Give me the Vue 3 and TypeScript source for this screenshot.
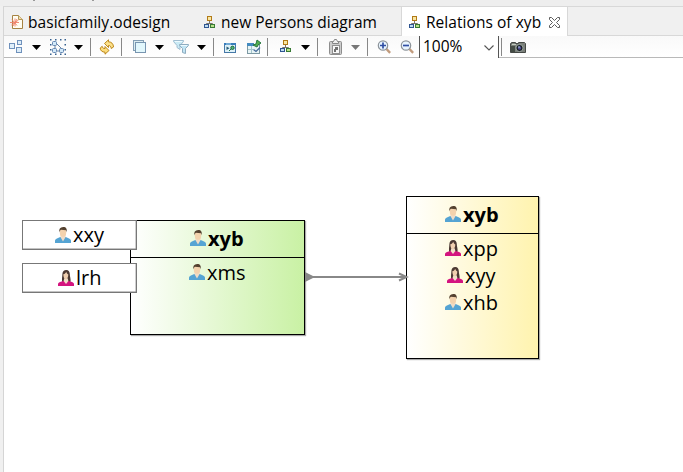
<script setup lang="ts">
type Kind = 'male' | 'female'
interface Member { name: string; kind: Kind; bold?: boolean; pos: string }
interface Tool { kind: 'icon' | 'arrow' | 'sep' | 'combo'; icon?: string; disabled?: boolean }

const icon = (name: string): Tool => ({ kind: 'icon', icon: name })
const arrow = (disabled = false): Tool => ({ kind: 'arrow', disabled })
const sep = (): Tool => ({ kind: 'sep' })

const tools: Tool[] = [
  icon('arrange'), arrow(), icon('select'), arrow(), sep(), icon('refresh'), sep(),
  icon('layers'), arrow(), icon('filter'), arrow(), sep(), icon('view'), icon('pinview'), sep(),
  icon('tree'), arrow(), sep(), icon('paste'), arrow(true), sep(),
  icon('zoomin'), icon('zoomout'), { kind: 'combo' }, sep(), icon('camera'),
]

const members: Member[] = [
  { name: 'xxy', kind: 'male', pos: 'm-xxy' },
  { name: 'lrh', kind: 'female', pos: 'm-lrh' },
  { name: 'xyb', kind: 'male', bold: true, pos: 'm-xyb1' },
  { name: 'xms', kind: 'male', pos: 'm-xms' },
  { name: 'xyb', kind: 'male', bold: true, pos: 'm-xyb2' },
  { name: 'xpp', kind: 'female', pos: 'm-xpp' },
  { name: 'xyy', kind: 'female', pos: 'm-xyy' },
  { name: 'xhb', kind: 'male', pos: 'm-xhb' },
]
</script>

<template>
  <div class="window">
    <svg class="defs" width="0" height="0">
      <defs>
        <symbol id="i-male" viewBox="0 0 16 16">
          <path d="M0 16v-2.5C.4 11.6 3 11 5.3 10h5.4c2.3 1 4.9 1.6 5.3 3.5V16z" fill="#55a4d3" />
          <path d="M5.4 10 8 14.4 10.6 10V7H5.4z" fill="#efdbc5" />
          <ellipse cx="8" cy="5.4" rx="3.2" ry="4.3" fill="#f3d2ad" />
          <path d="M4.4 5.3C3.8 2 5 .2 8.200.1c3.100 0 4.100 2 3.400 5.200L11 3.200 6 2.700l-.9.8z" fill="#54412f" />
        </symbol>
        <symbol id="i-female" viewBox="0 0 16 16">
          <path d="M4.600 12.200C3.500 11 4.200 7 4.400 4 4.600 1.200 6 0 8.200 0c2.600 0 3.500 1.800 3.600 4 .1 3 1.600 7 .3 8.400z" fill="#4c3933" />
          <path d="M0 16v-2.200C.5 12 3 11.800 5.500 11h5c2.500.8 5 1 5.500 2.800V16z" fill="#d4147f" />
          <path d="M5.600 11 8 14l2.400-3-.7-2.800H6.300z" fill="#f2dfc9" />
          <path d="M5.300 4.200c1.700-.1 2.500-1.300 3-2.400.3 1.400 1 2.300 2 2.800 0 2.700-1 4.700-2.400 4.700S5.300 7.300 5.300 4.200z" fill="#f0cfaf" />
        </symbol>
        <symbol id="i-tree" viewBox="0 0 16 16">
          <path d="M7.500 6v2.500M4.500 11V8.500h6V11" fill="none" stroke="#77736b" />
          <rect x="5.500" y="1.500" width="4" height="4" fill="#f9e6a2" stroke="#b17a17" />
          <rect x="2.500" y="9.500" width="4" height="3" fill="#bddcf0" stroke="#2f5591" />
          <rect x="8.500" y="9.500" width="4" height="3" fill="#b8e08a" stroke="#387b35" />
        </symbol>
        <symbol id="i-arrange" viewBox="0 0 16 16">
          <rect x="1.500" y="4.500" width="5" height="5" fill="#e0effa" stroke="#6f91bc" />
          <rect x="9.500" y="1.500" width="4" height="4" fill="#dcecf8" stroke="#6f91bc" />
          <rect x="8.500" y="8.500" width="5" height="5" fill="#dcecf8" stroke="#6f91bc" />
        </symbol>
        <symbol id="i-select" viewBox="0 0 16 16">
          <path d="M0 0h1.500v1.500H0zM5 0h1.500v1.500H5zM10 0h1.500v1.500H10zM14.500 0H16v1.500h-1.500zM0 5h1.500v1.500H0zM14.500 5H16v1.500h-1.500zM0 10h1.500v1.500H0zM14.500 10H16v1.500h-1.500zM0 14.500h1.500V16H0zM5 14.500h1.500V16H5zM10 14.500h1.500V16H10zM14.500 14.500H16V16h-1.500z" fill="#36618f" />
          <path d="m6 4 7 7M5 6v4M7 12h3" stroke="#6682a2" />
          <g fill="#d2e9f8" stroke="#6587b3"><rect x="2.500" y="2.500" width="4" height="4" rx="1" /><rect x="2.500" y="9.500" width="4" height="4" rx="1" /><rect x="9.500" y="9.500" width="4" height="4" rx="1" /></g>
        </symbol>
        <symbol id="i-refresh" viewBox="0 0 16 16">
          <path d="M5.500 4.500 9.500.800v2c2.800 0 5 2 5 5.200l-2.300 1.500C12 7.500 11.200 6.500 9.500 6.500v2z" fill="#fbe08a" stroke="#b57d0b" stroke-width=".9" />
          <path d="M10 11.500 6 15.200v-2c-2.800 0-4.800-1.700-4.800-4.200l2-1.700C3.500 9 4.300 9.500 6 9.500v-2z" fill="#fbdc7d" stroke="#b57d0b" stroke-width=".9" />
        </symbol>
        <symbol id="i-layers" viewBox="0 0 16 16">
          <rect x="1.500" y="1.500" width="10" height="10" fill="#dcecf0" stroke="#849fb5" />
          <rect x="3.500" y="3.500" width="10" height="10" fill="#e2f7fc" stroke="#7895b0" />
        </symbol>
        <symbol id="i-filter" viewBox="0 0 16 16">
          <path d="M.5 1.500h10v1l-3.500 4v4l-3-2v-2l-3.500-4z" fill="#c9eaf5" stroke="#a0bdd0" />
          <path d="M6.500 5.500h9v1l-3 3v5l-3-1v-4l-3-3z" fill="#c2e5f4" stroke="#8eacc0" />
          <path d="M2 2.500h7M8 6.500h6" stroke="#edfaff" />
        </symbol>
        <symbol id="i-view" viewBox="0 0 16 16">
          <rect x="2.500" y="4.500" width="11" height="9" fill="#def1f8" stroke="#4678a7" />
          <path d="M2 4h12v2H2z" fill="#397cba" /><path d="M4 5h5" stroke="#a8d5ef" />
          <path d="m4.500 7.500 3 1.800-3 1.800z" fill="#255b78" /><path d="m7 12 3-3" stroke="#1b7b46" />
          <circle cx="10.500" cy="8.800" r="1.700" fill="#54b573" stroke="#196740" />
        </symbol>
        <symbol id="i-pinview" viewBox="0 0 16 16">
          <rect x="1.500" y="5.500" width="12" height="9" fill="#e8f4f6" stroke="#7c99a3" />
          <path d="M1 4h7v3H1z" fill="#438bc0" /><path d="M5.500 7v7M2 10.500h5" stroke="#a4c6cc" />
          <path d="m7 6 3-1 1-4 4 3-3 2-1 2-2-1z" fill="#51ad4d" stroke="#287740" />
          <path d="m7.500 10.500 2.500 2 4-4" fill="none" stroke="#466c9c" stroke-width="1.300" />
        </symbol>
        <symbol id="i-paste" viewBox="0 0 16 16">
          <rect x="1.500" y="2.500" width="12" height="13" rx="1" fill="#ccc" stroke="#8d8d8d" />
          <path d="M4.500 4.500v-2h1l1-2h2l1 2h1v2z" fill="#eee" stroke="#858585" />
          <rect x="4.500" y="6.500" width="7" height="8" fill="#f8f8f8" stroke="#909090" />
          <path d="M7 8h3v3H8v2H6v-3h1z" fill="#707070" />
        </symbol>
        <symbol id="i-zoomin" viewBox="0 0 16 16">
          <path d="m9.500 10 3.600 3.800" stroke="#c19b7d" stroke-width="2.400" />
          <circle cx="6" cy="6.500" r="4.700" fill="#e9f5ff" stroke="#8c9399" stroke-width="1.200" />
          <path d="M3 6.500h6M6 3.500v6" stroke="#304fa3" stroke-width="1.700" />
        </symbol>
        <symbol id="i-zoomout" viewBox="0 0 16 16">
          <path d="m9.500 10 3.600 3.800" stroke="#c19b7d" stroke-width="2.400" />
          <circle cx="6" cy="6.500" r="4.700" fill="#e9f5ff" stroke="#8c9399" stroke-width="1.200" />
          <path d="M3 6.500h6" stroke="#304fa3" stroke-width="1.700" />
        </symbol>
        <symbol id="i-camera" viewBox="0 0 16 16">
          <path d="M.5 4.500h1v-1h4v1h3v-1h6l1 1v9H.5z" fill="#7b807a" stroke="#454946" />
          <path d="M1 7h4v6H1z" fill="#444c45" /><path d="M2 5.500h4" stroke="#c3cbc0" />
          <circle cx="9.500" cy="9" r="3.600" fill="#192026" stroke="#9ca5a0" />
          <circle cx="9.500" cy="9" r="1.700" fill="#514b96" /><path d="M8 8h2" stroke="#abc5de" />
        </symbol>
        <symbol id="i-doc" viewBox="0 0 14 16">
          <path d="M2.500 1.500h6l4 4v9h-10z" fill="#fffdf2" stroke="#a68343" />
          <path d="M8.500 1.500v4h4" fill="#f0deb0" stroke="#b49857" />
          <path d="M0 8.500h9M2 5.500l5 6M7 5 3 12M5 4.500v8M1.500 11l7-5" stroke="#ee8068" stroke-width=".9" />
        </symbol>
      </defs>
    </svg>

    <div class="topstrip"><i class="tick t1"></i><i class="tick t2"></i></div>
    <div class="editor">
      <div class="tabs">
        <div class="tab first">
          <svg class="doc"><use href="#i-doc" /></svg><span class="l1">basicfamily.odesign</span>
        </div>
        <div class="tab second">
          <svg class="tabicon"><use href="#i-tree" /></svg><span class="l2">new Persons diagram</span>
        </div>
        <div class="tab active">
          <svg class="tabicon"><use href="#i-tree" /></svg><span class="l3">Relations of xyb</span>
          <svg class="close" viewBox="0 0 11 11"><path d="M.5.500h2l3 3 3-3h2v2l-3 3 3 3v2h-2l-3-3-3 3h-2v-2l3-3-3-3z" fill="#fff" stroke="#5c5c5c" /></svg>
        </div>
        <div class="rest"></div>
      </div>
      <div class="toolbar">
        <template v-for="(t, i) in tools" :key="i">
          <svg v-if="t.kind === 'icon'" class="icon"><use :href="'#i-' + t.icon" /></svg>
          <svg v-else-if="t.kind === 'arrow'" class="arrow" :class="{ disabled: t.disabled }" viewBox="0 0 9 5"><path d="M0 0h9L4.500 5z" /></svg>
          <i v-else-if="t.kind === 'sep'" class="sep"></i>
          <div v-else class="combo">
            <span>100%</span>
            <svg viewBox="0 0 10 6"><path d="m.5.500 4.500 4.500L9.500.500" fill="none" stroke="#555" stroke-width="1.100" /></svg>
          </div>
        </template>
      </div>
      <div class="canvas">
        <div class="node green"><div class="head"></div></div>
        <div class="node yellow"><div class="head"></div></div>
        <div class="port p1"></div>
        <div class="port p2"></div>
        <svg class="edge" viewBox="0 0 104 12">
          <path d="M0 6h101" stroke="#888" stroke-width="2" />
          <path d="M0 1v10l10-5z" fill="#888" />
          <path d="m94 2.500 7.500 3.500-7.500 3.500" fill="none" stroke="#888" stroke-width="2" />
        </svg>
        <div v-for="m in members" :key="m.pos" class="member" :class="[m.pos, { bold: m.bold }]">
          <svg><use :href="'#i-' + m.kind" /></svg><span>{{ m.name }}</span>
        </div>
      </div>
    </div>
  </div>
</template>

<style>
body { margin: 0; overflow: hidden; }
</style>

<style scoped>
.window { width: 683px; height: 472px; background: #f0f0f0; color: #000; font-family: "Open Sans", "Noto Sans", sans-serif; overflow: hidden; }
.window * { box-sizing: border-box; }
.defs { position: absolute; }
svg { display: block; flex: none; }
.topstrip { height: 6px; display: flex; background: #eee; }
.tick { width: 2px; height: 1px; background: #999; }
.t1 { margin-left: 33px; }
.t2 { margin-left: 57px; }
.editor { margin-left: 3px; width: 680px; height: 466px; border-left: 1px solid #d5d5d5; border-top: 1px solid #d8d8d8; display: flex; flex-direction: column; }
.tabs { height: 29px; display: flex; flex: none; font-size: 15.5px; line-height: 29px; white-space: nowrap; }
.tab, .rest { display: flex; border-bottom: 1px solid #d8d8d8; }
.first { width: 192px; padding-left: 6px; }
.second { width: 205px; padding-left: 6px; }
.active { width: 167px; padding-left: 5px; background: #fff; border: 0 solid #d8d8d8; border-width: 0 1px; }
.rest { flex: 1; }
.tab span { height: 29px; margin-top: 1px; }
.doc { width: 14px; height: 16px; margin-top: 7px; margin-right: 4px; }
.tabicon { width: 16px; height: 16px; margin-top: 8px; margin-right: 3px; }
.l1 { letter-spacing: 0.05px; }
.l3 { letter-spacing: 0.05px; width: 116px; }
.close { width: 11px; height: 11px; margin: 10px 0 0 7px; }
.toolbar {
  height: 22px; flex: none; padding-left: 4px; background: linear-gradient(#f9f9f9, #fff); border-bottom: 1px solid #b9b9b9;
  display: grid; grid-template-columns: 24px 18px 24px 16px 9px 22px 11px 23px 18px 24px 16px 9px 24px 21px 11px 23px 16px 11px 23px 16px 10px 23px 19px 82px 9px 16px;
}
.icon { width: 16px; height: 16px; margin-top: 3px; }
.arrow { width: 9px; height: 5px; margin-top: 9px; fill: #000; }
.arrow.disabled { fill: #777; }
.sep { width: 1px; height: 18px; margin-top: 2px; background: #888; }
.combo { width: 80px; height: 22px; background: #fff; border-left: 1px solid #555; border-right: 1px solid #555; display: flex; padding-left: 3px; font-size: 15.5px; line-height: 20px; }
.combo span { width: 61px; }
.combo svg { width: 10px; height: 6px; margin-top: 9px; }
.canvas { position: relative; flex: 1; background: #fff; }
.node { position: absolute; border: 1px solid #000; box-shadow: 1px 1px 1px #aaa; }
.head { height: 37px; border-bottom: 1px solid #000; }
.green { left: 126px; top: 162px; width: 175px; height: 115px; background: linear-gradient(90deg, #fff, #c9f1a4); }
.yellow { left: 402px; top: 138px; width: 133px; height: 163px; background: linear-gradient(90deg, #fff, #fff3ae); }
.port { position: absolute; left: 18px; width: 115px; height: 30px; background: #fff; border: 1px solid #777; box-shadow: inset -.4px -.4px #888; }
.p1 { top: 162px; }
.p2 { top: 205px; }
.edge { position: absolute; left: 301px; top: 213px; width: 104px; height: 12px; }
.member { position: absolute; display: flex; height: 28px; font-size: 20px; line-height: 28px; white-space: nowrap; }
.member svg { width: 16px; height: 16px; margin-top: 6px; }
.member span { margin-left: 2px; padding-top: 1px; }
.bold { font-weight: 700; }
.m-xxy { left: 51px; top: 163px; }
.m-lrh { left: 54px; top: 206px; }
.m-xxy span, .m-lrh span { padding-top: 0; }
.m-xyb1 { left: 186px; top: 166px; }
.m-xms { left: 185px; top: 200px; }
.m-xyb2 { left: 441px; top: 142px; }
.m-xpp { left: 441px; top: 176px; }
.m-xyy { left: 443px; top: 203px; }
.m-xhb { left: 441px; top: 230px; }
</style>
